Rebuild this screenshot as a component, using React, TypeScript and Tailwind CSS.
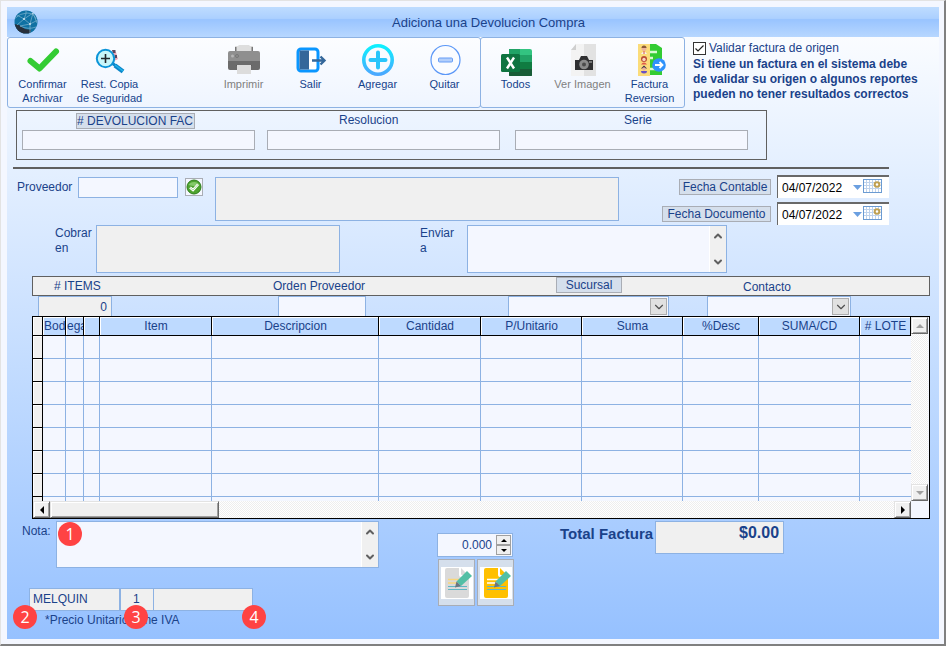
import React, { useState } from 'react';
import { ChevronDown, ChevronUp } from 'lucide-react';

interface ToolButtonProps {
  label: string;
  icon: React.ReactNode;
  disabled?: boolean;
}

interface TextAreaBoxProps {
  id: string;
  className: string;
}

interface ArrowButtonProps {
  label: string;
  points: string;
  disabled?: boolean;
}

const fieldLabels = [
  { id: 'resolucion', label: 'Resolucion', className: 'ml-[72px]' },
  { id: 'serie', label: 'Serie', className: 'ml-[109px]' }
];

const columns = [
  { title: 'Bod', width: 'w-[23px]', align: 'text-left' },
  { title: 'ega', width: 'w-[18px]', align: 'text-left' },
  { title: '', width: 'w-[16px]', align: 'text-center' },
  { title: 'Item', width: 'w-[112px]', align: 'text-center' },
  { title: 'Descripcion', width: 'w-auto', align: 'text-center' },
  { title: 'Cantidad', width: 'w-[102px]', align: 'text-center' },
  { title: 'P/Unitario', width: 'w-[101px]', align: 'text-center' },
  { title: 'Suma', width: 'w-[101px]', align: 'text-center' },
  { title: '%Desc', width: 'w-[76px]', align: 'text-center' },
  { title: 'SUMA/CD', width: 'w-[101px]', align: 'text-center' },
  { title: '# LOTE', width: 'w-[51px]', align: 'text-center' }
];

const rows = [0, 1, 2, 3, 4, 5, 6];

const GlobeIcon = () => (
  <svg width="24" height="24" viewBox="0 0 24 24" aria-hidden="true">
    <defs>
      <clipPath id="globe">
        <circle cx="12" cy="12" r="11.5" />
      </clipPath>
    </defs>
    <g clipPath="url(#globe)">
      <rect width="24" height="24" fill="#0f71a3" />
      <path d="M0 14 L5 15 L11 19 L17 20 L16 24 L0 24 Z" fill="#27303c" />
      <g fill="none" stroke="#7fb4d0" strokeWidth="0.700">
        <path d="M3 5 L10 9 L19 3 M10 9 L3 15 M10 9 L16 14 L24 10 M16 14 L6 16 M16 14 L16 23 M10 9 Q13 3 12 0" />
        <path d="M0 9 Q6 3 13 3 T22 9 M6 16 Q14 20 22 17 M19 3 L16 14 M19 3 L23 13" />
      </g>
      <g fill="#d8edf6">
        <circle cx="10" cy="9" r="0.900" />
        <circle cx="16" cy="14" r="0.900" />
        <circle cx="19" cy="3.500" r="0.700" />
      </g>
    </g>
  </svg>
);

const CheckIcon = () => (
  <svg width="34" height="32" viewBox="0 0 34 32" aria-hidden="true">
    <path d="M4.500 17 L13.500 24.500 L30 7.500" fill="none" stroke="#33cc33" strokeWidth="6" strokeLinecap="round" strokeLinejoin="round" />
  </svg>
);

const SearchIcon = () => (
  <svg width="32" height="32" viewBox="0 0 32 32" aria-hidden="true">
    <path d="M18 6 L22 8 L23 12 L24 15 L20 17 Z" fill="#f2a7b5" />
    <path d="M18 6h3.500v3H19zM21 11h2v3h-2z" fill="#5a4760" />
    <path d="M18 19 L22 22" stroke="#0b86c9" strokeWidth="3" />
    <path d="M21 21.500 L29 27.500" stroke="#0b86c9" strokeWidth="4.500" />
    <path d="M21 21 L29 27" stroke="#1fb2ea" strokeWidth="1.500" />
    <circle cx="11.500" cy="14.500" r="8.700" fill="#c8f6fa" stroke="#0c94d8" strokeWidth="2" />
    <path d="M11.500 10v9M7 14.500h9" stroke="#20252b" strokeWidth="1.600" />
  </svg>
);

const PrinterIcon = () => (
  <svg width="34" height="32" viewBox="0 0 34 32" aria-hidden="true">
    <path d="M8 2 L11 2 L12 1 L22 1 L23 2 L26 2 L26 8 L8 8 Z" fill="#dedede" />
    <path d="M8 3h1.500v5H8zM24.500 3H26v5h-1.500z" fill="#777" />
    <path d="M3 7 H31 Q33 7 33 9 V17 H1 V9 Q1 7 3 7Z" fill="#8f8f8f" />
    <path d="M1 17 H33 V24 Q33 26 31 26 H3 Q1 26 1 24Z" fill="#6b6b6b" />
    <path d="M9 21h16v1H9z" fill="#5c5c5c" />
    <path d="M10 21h14v9H10z" fill="#dcdcdc" />
    <circle cx="5.500" cy="12" r="1.500" fill="#b5b5b5" />
    <circle cx="10" cy="12" r="1.500" fill="none" stroke="#777" />
  </svg>
);

const ExitIcon = () => (
  <svg width="32" height="32" viewBox="0 0 32 32" aria-hidden="true">
    <rect x="3" y="5" width="20" height="22" rx="3" fill="#fff" stroke="#0a96ff" strokeWidth="3" />
    <path d="M4.500 6.500 L14 6.500 L14 25.500 L4.500 25.500Z" fill="#34679a" />
    <path d="M17 16.500 H29 M25.500 12.500 L29.500 16.500 L25.500 20.500" fill="none" stroke="#34679a" strokeWidth="2.400" />
  </svg>
);

const AddIcon = () => (
  <svg width="32" height="32" viewBox="0 0 32 32" aria-hidden="true">
    <defs>
      <linearGradient id="ring" x1="0" y1="0" x2="0" y2="1">
        <stop offset="0" stopColor="#0ef0ff" />
        <stop offset="1" stopColor="#4aa8ff" />
      </linearGradient>
    </defs>
    <circle cx="16" cy="16" r="14.200" fill="none" stroke="url(#ring)" strokeWidth="3.600" />
    <path d="M16 8.500v15M8.500 16h15" stroke="#29c5fb" strokeWidth="4" strokeLinecap="round" />
  </svg>
);

const MinusIcon = () => (
  <svg width="32" height="32" viewBox="0 0 32 32" aria-hidden="true">
    <circle cx="16.500" cy="16" r="14.500" fill="#fafcff" stroke="#5b97f7" strokeWidth="1.200" />
    <rect x="9.500" y="14" width="14" height="4" rx="1" fill="#b3cffb" stroke="#669df6" />
  </svg>
);

const ExcelIcon = () => (
  <svg width="32" height="32" viewBox="0 0 32 32" aria-hidden="true">
    <path d="M9 5h12v7H9z" fill="#21a366" />
    <path d="M20 5h10q2 0 2 2v5H20z" fill="#33c481" />
    <path d="M9 11h12v7H9z" fill="#107c41" />
    <path d="M20 11h12v7H20z" fill="#21a366" />
    <path d="M9 18h12v7H9z" fill="#185c37" />
    <path d="M20 18h12v7H20z" fill="#107c41" />
    <path d="M9 25h23v6q0 2-2 2H11q-2 0-2-2z" fill="#185c37" />
    <rect x="1" y="10" width="19" height="18" rx="1.500" fill="#0e7440" />
    <path d="M7 13.500 L14 24.500 M14 13.500 L7 24.500" stroke="#fff" strokeWidth="2.400" />
  </svg>
);

const CameraIcon = () => (
  <svg width="32" height="32" viewBox="0 0 32 32" aria-hidden="true">
    <path d="M9 0h8v32H4V6z" fill="#f3f3f3" />
    <path d="M17 0h12v32H17z" fill="#e2e2e2" />
    <path d="M4 6 L9 0 V6Z" fill="#cfcfcf" />
    <path d="M8 16h4l2-4h6l2 4h4v10H8z" fill="#2f2f31" />
    <circle cx="17" cy="20.500" r="4.800" fill="#8b8b8b" />
    <circle cx="17" cy="20.500" r="2" fill="#4b4b4b" />
    <path d="M22 17h3v2h-3z" fill="#777" />
  </svg>
);

const InvoiceIcon = () => (
  <svg width="32" height="32" viewBox="0 0 32 32" aria-hidden="true">
    <path d="M14 0h8l6 4v27H14z" fill="#33cc33" />
    <path d="M15 8h8M15 14h4M15 25h8" stroke="#d9fbd2" strokeWidth="2.500" />
    <path d="M4 0h12v32H4z" fill="#fbdc7a" />
    <circle cx="10" cy="4.500" r="2.500" fill="#efb39b" />
    <path d="M7.500 4a2.500 2.500 0 0 1 5 0z" fill="#8a5a3c" />
    <path d="M7 10q3-5 6 0z" fill="#f5f5f5" />
    <path d="M10 7v3" stroke="#d8483c" />
    <circle cx="10" cy="15" r="3" fill="#b94a35" />
    <circle cx="10" cy="15.500" r="1.700" fill="#fbd3bd" />
    <path d="M7 20.500q3-4 6 0z" fill="#e1574c" />
    <path d="M7 24.500 L10 21.500 L13 24.500Z" fill="#302848" />
    <circle cx="10" cy="25" r="1.800" fill="#efb39b" />
    <path d="M7 27h6q0 2.500-3 2.500T7 27z" fill="#6952c4" />
    <circle cx="25" cy="21" r="6.800" fill="#2f92fb" />
    <path d="M21 21h7M25.500 18l3 3-3 3" fill="none" stroke="#fff" strokeWidth="1.800" />
  </svg>
);

const ConfirmIcon = () => (
  <svg width="16" height="16" viewBox="0 0 16 16" aria-hidden="true">
    <rect width="16" height="16" fill="#f4f7ff" />
    <circle cx="8" cy="8" r="7" fill="#4da32f" stroke="#2c7d1a" />
    <path d="M2.500 6a6 5 0 0 1 11 0q-5 2-11 0z" fill="#84c96a" />
    <path d="M4 8.500 L7 11 L12 5.500" fill="none" stroke="#fff" strokeWidth="2.600" />
    <path d="M4 8.500 L7 11 L12 5.500" fill="none" stroke="#7dbd68" strokeWidth="0.600" />
  </svg>
);

const CalendarIcon = () => (
  <svg width="29" height="14" viewBox="0 0 29 14" aria-hidden="true">
    <path d="M0 6h9l-4.500 5z" fill="#6b9fe0" />
    <rect x="10.500" y="0.500" width="18" height="13" fill="#fff" stroke="#6b9bd2" />
    <path d="M13.500 1v12M16.500 1v12M19.500 1v12M22.500 1v12M25.500 1v12M11 3.500h17M11 6.500h17M11 9.500h17" stroke="#bfd3ec" />
    <circle cx="24" cy="5.500" r="2.300" fill="#fff" stroke="#c0a050" strokeWidth="2" />
  </svg>
);

const NoteIcon = ({ page, line }: { page: string; line: string }) => (
  <svg width="32" height="32" viewBox="0 0 32 32" aria-hidden="true">
    <rect width="32" height="32" fill="#fff" />
    <path d="M6 1h12v7q0 2 2 2h8V29q0 2-2 2H6q-2 0-2-2V3q0-2 2-2z" fill={page} />
    <path d="M20 1 L27 8 H21 Q20 8 20 7Z" fill={page} />
    <path d="M7 12.500h13M7 16h10" stroke={line} strokeWidth="1.500" />
    <path d="M7 19.500h19M7 22.500h19" stroke="#5fb6c4" strokeWidth="1.200" />
    <path d="M26 4 L31 9 L20 19 L15.500 14.500Z" fill="#53bfa5" />
    <path d="M15.500 14.500 L20 19 L14 20.500Z" fill="#6a7580" />
  </svg>
);

const ToolButton: React.FC<ToolButtonProps> = ({ label, icon, disabled }) => (
  <button
    type="button"
    disabled={disabled}
    className="flex w-[67px] flex-col items-center gap-px pt-[6px] text-[11px] leading-[14px] whitespace-pre text-[#15428b] disabled:text-[#808080]"
  >
    {icon}
    <span>{label}</span>
  </button>
);

const TextAreaBox: React.FC<TextAreaBoxProps> = ({ id, className }) => (
  <div className={`flex border border-[#8db2e3] bg-[#f4f7ff] ${className}`}>
    <textarea id={id} className="min-w-0 flex-1 resize-none px-1 outline-none" />
    <div className="flex w-[17px] flex-col items-center justify-between border-l border-white bg-[#f0f0f0] py-1 text-[#606060]">
      <ChevronUp size={12} strokeWidth={4} />
      <ChevronDown size={12} strokeWidth={4} />
    </div>
  </div>
);

const ArrowButton: React.FC<ArrowButtonProps> = ({ label, points, disabled }) => (
  <button
    type="button"
    aria-label={label}
    disabled={disabled}
    className="flex h-[17px] w-[17px] shrink-0 items-center justify-center border border-t-[#e3e3e3] border-r-[#696969] border-b-[#696969] border-l-[#e3e3e3] bg-[#f0f0f0] text-black shadow-[inset_1px_1px_0_#fff,inset_-1px_-1px_0_#a0a0a0] disabled:text-[#a0a0a0]"
  >
    <svg width="8" height="8" viewBox="0 0 8 8" aria-hidden="true">
      <polygon points={points} fill="currentColor" />
    </svg>
  </button>
);

const GrayButton = ({ label, className }: { label: string; className: string }) => (
  <button
    type="button"
    className={`h-4 border border-[#a9adb5] bg-[#d5dfec] leading-[14px] whitespace-nowrap ${className}`}
  >
    {label}
  </button>
);

const DateField = ({ label, className }: { label: string; className: string }) => {
  const [value, setValue] = useState('04/07/2022');

  return (
    <div className="flex items-center justify-end gap-[6px]">
      <GrayButton label={label} className={className} />
      <div className="flex h-[23px] w-[112px] items-center border-t-2 border-l border-[#696969] bg-white pl-1">
        <input
          aria-label={label}
          value={value}
          onChange={e => setValue(e.target.value)}
          className="w-[71px] pt-[2px] text-[12px] text-black outline-none"
        />
        <button type="button" aria-label={`Calendario ${label}`} className="pb-[3px]">
          <CalendarIcon />
        </button>
      </div>
    </div>
  );
};

const ComboBox = ({ label, className }: { label: string; className: string }) => (
  <div className={`relative h-5 border border-b-0 border-[#8db2e3] bg-[#f4f7ff] ${className}`}>
    <select aria-label={label} className="h-full w-full appearance-none px-1 outline-none">
      <option value=""></option>
    </select>
    <span className="pointer-events-none absolute top-px right-px flex h-[17px] w-[17px] items-center justify-center border border-[#adadad] bg-[#e1e1e1] text-[#505050]">
      <ChevronDown size={14} />
    </span>
  </div>
);

const Marker = ({ value, className }: { value: number; className: string }) => (
  <span
    className={`absolute z-10 flex h-6 w-6 items-center justify-center rounded-full bg-[#ff4343] font-['Open_Sans',sans-serif] text-[16px] leading-6 text-white ${className}`}
  >
    {value}
  </span>
);

const ItemsTable = () => (
  <div className="border border-black bg-[#f4f7ff]">
    <div className="flex pr-px">
      <div className="h-[184px] min-w-0 flex-1 overflow-hidden">
        <table className="w-full table-fixed border-separate border-spacing-0">
          <thead>
            <tr className="h-[19px]">
              <th className="w-[10px] border-r border-b border-black bg-[#f0f0f0] p-0 shadow-[inset_1px_1px_0_#fff]" />
              {columns.map((column, index) => (
                <th
                  key={index}
                  className={`overflow-hidden border-r border-b border-black bg-[#bedaff] p-0 pl-px leading-[18px] font-normal whitespace-nowrap shadow-[inset_1px_1px_0_#fff] ${column.width} ${column.align}`}
                >
                  {column.title}
                </th>
              ))}
            </tr>
          </thead>
          <tbody>
            {rows.map(row => (
              <tr key={row} className="h-[23px]">
                <td className="border-r border-b border-black bg-[#f0f0f0] p-0 shadow-[inset_1px_1px_0_#fff]" />
                {columns.map((column, index) => (
                  <td key={index} className="border-r border-b border-[#8db2e3] p-0 last:border-r-0" />
                ))}
              </tr>
            ))}
            <tr className="h-[23px]">
              <td className="border-r border-black bg-[#f0f0f0] p-0" />
              {columns.map((column, index) => (
                <td key={index} className="border-r border-[#8db2e3] p-0 last:border-r-0" />
              ))}
            </tr>
          </tbody>
        </table>
      </div>
      <div className="flex w-[17px] flex-col justify-between bg-[repeating-conic-gradient(#fff_0_25%,#eee_0_50%)] bg-[length:2px_2px]">
        <ArrowButton label="Subir" points="0,6 4,2 8,6" disabled />
        <ArrowButton label="Bajar" points="0,2 4,6 8,2" disabled />
      </div>
    </div>
    <div className="mr-[18px] flex justify-between bg-[repeating-conic-gradient(#fff_0_25%,#eee_0_50%)] bg-[length:2px_2px]">
      <div className="flex">
        <ArrowButton label="Izquierda" points="6,0 2,4 6,8" />
        <div className="h-[17px] w-[169px] border border-t-[#e3e3e3] border-r-[#696969] border-b-[#696969] border-l-[#e3e3e3] bg-[#f0f0f0] shadow-[inset_1px_1px_0_#fff,inset_-1px_-1px_0_#a0a0a0]" />
      </div>
      <ArrowButton label="Derecha" points="2,0 6,4 2,8" />
    </div>
  </div>
);

const App: React.FC = () => {
  const [validate, setValidate] = useState(true);
  const [items, setItems] = useState('0');
  const [amount, setAmount] = useState('0.000');

  const stepAmount = (delta: number) => {
    setAmount((Number(amount) + delta).toFixed(3));
  };

  return (
    <div className="flex min-h-screen w-full flex-col border-t border-r-2 border-b-2 border-l border-t-[#e3e3e3] border-r-[#808080] border-b-[#808080] border-l-[#e3e3e3] bg-[#f4f7ff] pt-[6px] pr-[5px] pb-[5px] pl-[6px] font-['Liberation_Sans',Arial,sans-serif] text-[12px] leading-[15px] text-[#1a428a]">
      <header className="flex h-[30px] items-center bg-[linear-gradient(#bedcff_0%,#acd0ff_38%,#99c4ff_42%,#b7d7ff_100%)] pl-[7px]">
        <GlobeIcon />
        <h1 className="flex-1 text-center text-[13px]">Adiciona una Devolucion Compra</h1>
      </header>

      <main className="flex-1 bg-linear-to-b from-[#fafcff] to-[#96c1ff]">
        <div className="flex">
          <div className="flex h-[71px] w-[474px] rounded-[3px] border border-[#8db2e3] bg-linear-to-b from-[#fcfdff] to-[#eff5ff] pl-px">
            <ToolButton label={'Confirmar\nArchivar'} icon={<CheckIcon />} />
            <ToolButton label={'Rest. Copia\nde Seguridad'} icon={<SearchIcon />} />
            <div className="w-[67px]" />
            <ToolButton label="Imprimir" icon={<PrinterIcon />} disabled />
            <ToolButton label="Salir" icon={<ExitIcon />} />
            <ToolButton label="Agregar" icon={<AddIcon />} />
            <ToolButton label="Quitar" icon={<MinusIcon />} />
          </div>
          <div className="-ml-px flex h-[71px] w-[205px] rounded-[3px] border border-[#8db2e3] bg-linear-to-b from-[#fcfdff] to-[#eff5ff] pl-px">
            <ToolButton label="Todos" icon={<ExcelIcon />} />
            <ToolButton label="Ver Imagen" icon={<CameraIcon />} disabled />
            <ToolButton label={'Factura\nReversion'} icon={<InvoiceIcon />} />
          </div>
          <div className="flex flex-col gap-px pt-1 pl-2">
            <label className="relative flex items-center gap-[3px]">
              <input
                type="checkbox"
                checked={validate}
                onChange={e => setValidate(e.target.checked)}
                className="peer sr-only"
              />
              <span className="flex h-[13px] w-[13px] items-center justify-center border border-[#333] bg-white text-transparent peer-checked:text-[#222]">
                <svg width="11" height="11" viewBox="0 0 11 11" aria-hidden="true">
                  <path d="M1.500 5.500 L4 8 L9.500 2.500" fill="none" stroke="currentColor" strokeWidth="1.200" />
                </svg>
              </span>
              Validar factura de origen
            </label>
            <p className="font-bold whitespace-nowrap">
              Si tiene un factura en el sistema debe
              <br />
              de validar su origen o algunos reportes
              <br />
              pueden no tener resultados correctos
            </p>
          </div>
        </div>

        <section className="mt-[2px] ml-[9px] grid h-[50px] w-[751px] grid-cols-[245px_248px_233px] border border-[#606060] px-[5px] pt-[2px]">
          <div>
            <GrayButton label="# DEVOLUCION FAC" className="ml-[54px] block w-[119px] text-left" />
            <input
              aria-label="# DEVOLUCION FAC"
              className="mt-px h-5 w-[233px] border border-[#a9adb5] bg-[#f4f7ff] px-1 outline-none"
            />
          </div>
          {fieldLabels.map(field => (
            <div key={field.id}>
              <label htmlFor={field.id} className={`block h-4 ${field.className}`}>
                {field.label}
              </label>
              <input
                id={field.id}
                className="mt-px h-5 w-[233px] border border-[#a9adb5] bg-[#f4f7ff] px-1 outline-none"
              />
            </div>
          ))}
        </section>

        <hr className="mt-[7px] mr-[50px] ml-[6px] border-t-2 border-[#606060]" />

        <section className="mt-[6px] mr-[50px] flex items-start justify-between pl-[10px]">
          <div className="flex items-start pt-[2px]">
            <label htmlFor="proveedor" className="w-[61px] pt-[3px]">
              Proveedor
            </label>
            <input id="proveedor" className="h-[21px] w-[100px] border border-[#8db2e3] bg-[#f4f7ff] px-1 outline-none" />
            <button type="button" aria-label="Buscar proveedor" className="mt-px ml-[7px] border border-[#a9adb5]">
              <ConfirmIcon />
            </button>
            <output className="ml-3 h-11 w-[404px] border border-[#8db2e3] bg-[#f0f0f0]" />
          </div>
          <div className="flex flex-col gap-1">
            <DateField label="Fecha Contable" className="w-[92px]" />
            <DateField label="Fecha Documento" className="w-[109px]" />
          </div>
        </section>

        <section className="flex pl-12">
          <span className="w-[41px] pt-px">
            Cobrar
            <br />
            en
          </span>
          <output className="h-12 w-[244px] border border-[#8db2e3] bg-[#f0f0f0]" />
          <label htmlFor="enviar" className="ml-20 w-[47px] pt-px">
            Enviar
            <br />a
          </label>
          <TextAreaBox id="enviar" className="h-12 w-[260px]" />
        </section>

        <section className="mt-[3px] mr-[9px] ml-[25px]">
          <div className="grid h-5 grid-cols-[235px_230px_199px_1fr] border border-[#606060] bg-[#f0f0f0]">
            <label htmlFor="items" className="pt-[2px] pl-[21px]">
              # ITEMS
            </label>
            <label htmlFor="orden" className="pt-[2px] pl-[5px]">
              Orden Proveedor
            </label>
            <GrayButton label="Sucursal" className="ml-[58px] w-[66px]" />
            <span className="pt-[3px] pl-[46px]">Contacto</span>
          </div>
          <div className="grid grid-cols-[235px_230px_199px_1fr] px-px">
            <input
              id="items"
              value={items}
              onChange={e => setItems(e.target.value)}
              className="ml-[5px] h-5 w-[74px] border border-b-0 border-[#8db2e3] bg-[#f0f0f0] px-1 text-right outline-none"
            />
            <input id="orden" className="ml-[10px] h-5 w-[88px] border border-b-0 border-[#8db2e3] bg-[#f4f7ff] px-1 outline-none" />
            <ComboBox label="Sucursal" className="ml-[10px] w-[161px]" />
            <ComboBox label="Contacto" className="ml-[10px] w-36" />
          </div>
          <ItemsTable />
        </section>

        <section className="mt-[2px] flex items-start pl-[15px]">
          <div>
            <div className="relative flex">
              <label htmlFor="nota" className="w-[34px] pt-[3px]">
                Nota:
              </label>
              <TextAreaBox id="nota" className="h-[47px] w-[323px]" />
              <Marker value={1} className="top-px left-9" />
            </div>
            <div className="mt-5 ml-[7px] flex h-[23px] leading-[21px]">
              <div className="relative w-[91px] border border-[#8db2e3] bg-[#f0f0f0] pl-[3px]">
                MELQUIN
                <Marker value={2} className="top-4 -left-[17px]" />
              </div>
              <div className="relative w-[34px] border border-[#8db2e3] bg-[#f0f0f0] pl-3">
                1
                <Marker value={3} className="top-4 left-[3px]" />
              </div>
              <div className="relative -ml-px w-[100px] border border-[#8db2e3] bg-[#f0f0f0]">
                <Marker value={4} className="top-4 left-[88px]" />
              </div>
            </div>
            <p className="mt-[2px] ml-[23px]">*Precio Unitario tiene IVA</p>
          </div>

          <div className="mt-3 ml-[58px]">
            <div className="flex h-6 w-[76px] items-center border border-[#8db2e3] bg-[#f4f7ff] pr-px">
              <input
                aria-label="Cantidad"
                value={amount}
                onChange={e => setAmount(e.target.value)}
                className="min-w-0 flex-1 pr-1 text-right outline-none"
              />
              <div className="flex flex-col text-black">
                <button
                  type="button"
                  aria-label="Aumentar"
                  onClick={() => stepAmount(1)}
                  className="flex h-[10px] w-[15px] items-center justify-center border border-[#a0a0a0] bg-[#f0f0f0]"
                >
                  <svg width="6" height="3" viewBox="0 0 6 3" aria-hidden="true">
                    <polygon points="0,3 3,0 6,3" />
                  </svg>
                </button>
                <button
                  type="button"
                  aria-label="Disminuir"
                  onClick={() => stepAmount(-1)}
                  className="flex h-[10px] w-[15px] items-center justify-center border border-[#a0a0a0] bg-[#f0f0f0]"
                >
                  <svg width="6" height="3" viewBox="0 0 6 3" aria-hidden="true">
                    <polygon points="0,0 3,3 6,0" />
                  </svg>
                </button>
              </div>
            </div>
            <div className="mt-[2px] ml-px flex gap-[2px]">
              <button
                type="button"
                aria-label="Nota"
                className="flex h-[47px] w-[37px] items-center justify-center border border-[#a9adb5] bg-[#d5dfec]"
              >
                <NoteIcon page="#dadada" line="#f9d67c" />
              </button>
              <button
                type="button"
                aria-label="Editar nota"
                className="flex h-[47px] w-[37px] items-center justify-center border border-[#a9adb5] bg-[#d5dfec]"
              >
                <NoteIcon page="#ffc000" line="#fff" />
              </button>
            </div>
          </div>

          <div className="ml-[46px] flex gap-[2px] font-bold">
            <span className="pt-[5px] text-[15px]">Total Factura</span>
            <output className="h-[33px] w-[129px] border border-[#8db2e3] bg-[#f0f0f0] pt-[3px] pr-1 text-right text-[16px]">
              $0.00
            </output>
          </div>
        </section>
      </main>
    </div>
  );
};

export default App;
